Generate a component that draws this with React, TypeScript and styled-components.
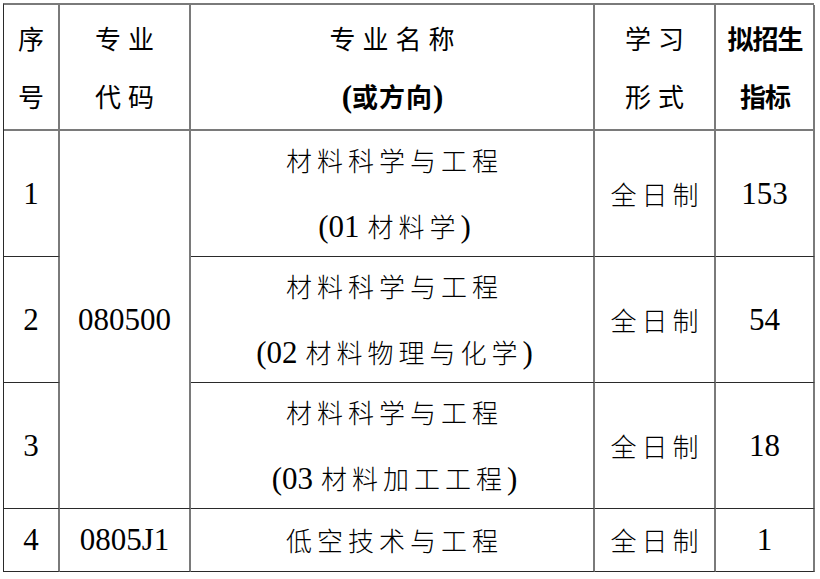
import React from "react";
import styled, { createGlobalStyle } from "styled-components";

const Global = createGlobalStyle`
  html, body { margin: 0; padding: 0; background: #ffffff; }
  body { width: 820px; height: 579px; overflow: hidden; }
`;

const SERIF = `"Liberation Serif", "Times New Roman", "DejaVu Serif", serif`;
const CJK = `"Noto Sans CJK SC", "Noto Sans", sans-serif`;

const Table = styled.div`
  margin: 3px 0 0 3px;
  display: grid;
  grid-template-columns: 56px 131px 404px 121px 99px;
  grid-template-rows: 126px 126px 126px 126px 63px;
  width: 811px;
  border-left: 1px solid #2a2a2a;
  border-top: 2px solid #7a7a7a;
  box-sizing: border-box;
  font-family: ${CJK};
  color: #000;
`;

const Cell = styled.div<{ $darkBottom?: boolean; $span?: number; $col?: number }>`
  box-sizing: border-box;
  display: flex;
  flex-direction: column;
  align-items: center;
  justify-content: center;
  border-right: 2px solid #7a7a7a;
  border-bottom: ${(p) => (p.$darkBottom ? "1.5px solid #2a2a2a" : "2px solid #7a7a7a")};
  ${(p) => (p.$span ? `grid-row: span ${p.$span};` : "")}
  ${(p) => (p.$col ? `grid-column: ${p.$col};` : "")}
`;

const Head = styled.div<{ $bold?: boolean; $tight?: boolean }>`
  font-size: 26px;
  line-height: 58px;
  letter-spacing: ${(p) => (p.$tight ? "-1px" : p.$bold ? "1px" : "7px")};
  margin-right: ${(p) => (p.$tight ? "-1px" : p.$bold ? "-1px" : "-7px")};
  font-weight: ${(p) => (p.$bold ? 700 : 400)};
  white-space: nowrap;
`;

const Line = styled.div`
  font-size: 26px;
  line-height: 66px;
  letter-spacing: 5px;
  margin-right: -5px;
  font-weight: 300;
  white-space: nowrap;
`;

const Latin = styled.span<{ $bold?: boolean }>`
  font-family: ${SERIF};
  font-size: 31px;
  letter-spacing: 0;
  font-weight: ${(p) => (p.$bold ? 700 : 400)};
`;

const Gap = styled.span`
  display: inline-block;
  width: 8px;
`;

const Num = styled.div`
  font-family: ${SERIF};
  font-size: 31px;
  font-weight: 400;
  letter-spacing: 0;
`;

type Row = { no: string; name: string; code: string; sub: string; form: string; quota: string };

const rows: Row[] = [
  { no: "1", name: "材料科学与工程", code: "01", sub: "材料学", form: "全日制", quota: "153" },
  { no: "2", name: "材料科学与工程", code: "02", sub: "材料物理与化学", form: "全日制", quota: "54" },
  { no: "3", name: "材料科学与工程", code: "03", sub: "材料加工工程", form: "全日制", quota: "18" },
];

export default function App() {
  return (
    <>
      <Global />
      <Table>
        <Cell>
          <Head>序</Head>
          <Head>号</Head>
        </Cell>
        <Cell>
          <Head>专业</Head>
          <Head>代码</Head>
        </Cell>
        <Cell>
          <Head>专业名称</Head>
          <Head $bold>
            <Latin $bold>(</Latin>或方向<Latin $bold>)</Latin>
          </Head>
        </Cell>
        <Cell>
          <Head>学习</Head>
          <Head>形式</Head>
        </Cell>
        <Cell>
          <Head $bold $tight>拟招生</Head>
          <Head $bold $tight>指标</Head>
        </Cell>

        {rows.map((r, i) => (
          <React.Fragment key={r.no}>
            <Cell $darkBottom $col={1}>
              <Num>{r.no}</Num>
            </Cell>
            {i === 0 && (
              <Cell $span={3} $darkBottom $col={2}>
                <Num>080500</Num>
              </Cell>
            )}
            <Cell $darkBottom $col={3}>
              <Line>{r.name}</Line>
              <Line>
                <Latin>({r.code}</Latin>
                <Gap />
                {r.sub}
                <Latin>)</Latin>
              </Line>
            </Cell>
            <Cell $darkBottom $col={4}>
              <Line>{r.form}</Line>
            </Cell>
            <Cell $darkBottom $col={5}>
              <Num>{r.quota}</Num>
            </Cell>
          </React.Fragment>
        ))}

        <Cell $darkBottom>
          <Num>4</Num>
        </Cell>
        <Cell $darkBottom>
          <Num>0805J1</Num>
        </Cell>
        <Cell $darkBottom>
          <Line>低空技术与工程</Line>
        </Cell>
        <Cell $darkBottom>
          <Line>全日制</Line>
        </Cell>
        <Cell $darkBottom>
          <Num>1</Num>
        </Cell>
      </Table>
    </>
  );
}
